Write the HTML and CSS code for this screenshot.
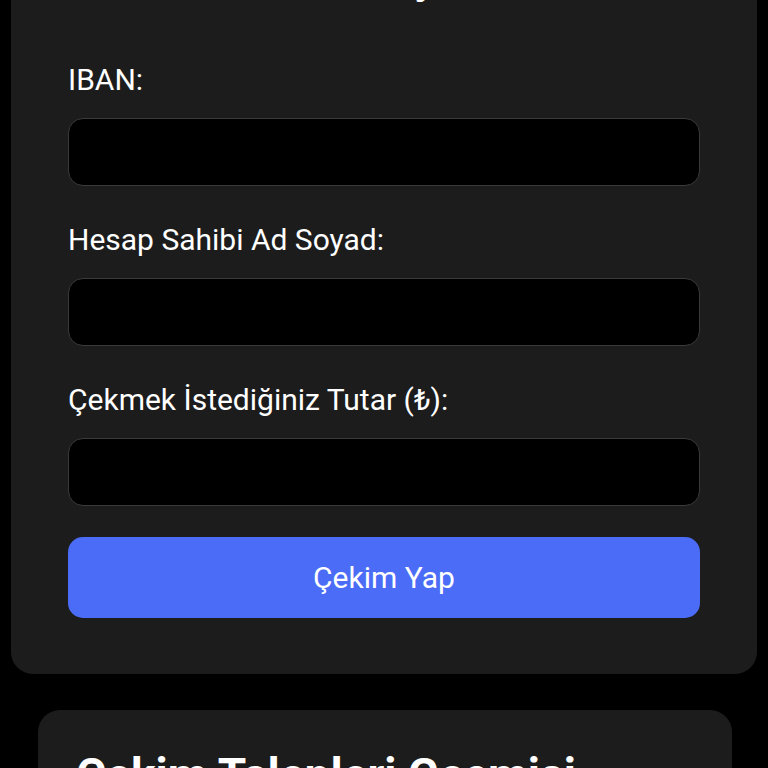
FILE: index.html
```html
<!DOCTYPE html>
<html lang="tr">
<head>
    <meta charset="UTF-8">
    <meta name="viewport" content="width=device-width, initial-scale=1.0">
    <title>Para Çekme</title>
    <link rel="stylesheet" href="styles.css">
</head>
<body>
    <main class="page">
        <section class="card withdraw-card">
            <h2 class="card-title">Kullanılabilir Bakiye</h2>
            <form class="withdraw-form">
                <label for="iban">IBAN:</label>
                <input type="text" id="iban">

                <label for="holder">Hesap Sahibi Ad Soyad:</label>
                <input type="text" id="holder">

                <label for="amount">Çekmek İstediğiniz Tutar (₺):</label>
                <input type="number" id="amount">

                <button type="submit" class="submit-btn">Çekim Yap</button>
            </form>
        </section>

        <section class="card history-card">
            <h2 class="history-title">Çekim Talepleri Geçmişi</h2>
            <p class="empty">Henüz bir çekim talebiniz bulunmuyor.</p>
        </section>
    </main>
</body>
</html>
```

FILE: styles.css
```css
/* Genel */
html, body {
    margin: 0;
    background: #000;
    overflow: hidden;
}

body {
    font-family: Roboto, "Noto Sans", Arial, sans-serif;
    color: #fff;
}

.page {
    margin-top: -107px;
}

.card {
    background: #1c1c1c;
    border-radius: 22px;
}

.withdraw-card {
    margin: 0 11px;
    padding: 57px 57px 56px;
}

.card-title {
    margin: 0 0 61px -14px;
    font-size: 46px;
    line-height: 54px;
    font-weight: 700;
}

.withdraw-form {
    display: flex;
    flex-direction: column;
}

.withdraw-form label {
    font-size: 30px;
    line-height: 30px;
    margin-bottom: 23px;
}

.withdraw-form input {
    height: 68px;
    box-sizing: border-box;
    background: #000;
    border: 1.5px solid #3a3a3a;
    border-radius: 15px;
    color: #fff;
    font-size: 26px;
    padding: 0 18px;
    margin-bottom: 39px;
    outline: none;
}

.withdraw-form input:last-of-type {
    margin-bottom: 31px;
}

.submit-btn {
    height: 81px;
    background: #4a6cf6;
    color: #fff;
    border: none;
    border-radius: 15px;
    font-family: inherit;
    font-size: 30px;
    cursor: pointer;
}

.history-card {
    margin: 36px 36px 40px 38px;
    padding: 38px;
}

.history-title {
    margin: 0 0 20px;
    font-size: 46px;
    line-height: 54px;
    font-weight: 700;
}

.empty {
    color: #aaa;
    font-size: 26px;
}
```
